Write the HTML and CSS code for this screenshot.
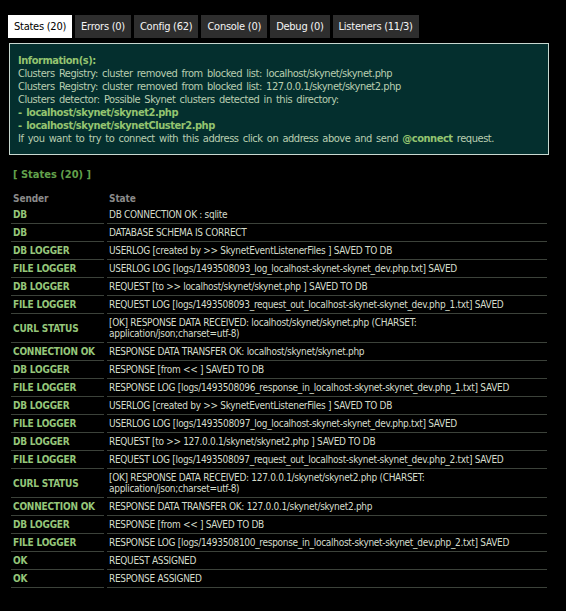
FILE: index.html
```html
<!DOCTYPE html>
<html>
<head>
<meta charset="utf-8">
<link rel="stylesheet" href="styles.css">
</head>
<body>
<div class="tabs">
  <span class="tab active">States (20)</span>
  <span class="tab">Errors (0)</span>
  <span class="tab">Config (62)</span>
  <span class="tab">Console (0)</span>
  <span class="tab">Debug (0)</span>
  <span class="tab">Listeners (11/3)</span>
</div>
<div class="info">
  <div class="hl">Information(s):</div>
  <div>Clusters Registry: cluster removed from blocked list: localhost/skynet/skynet.php</div>
  <div>Clusters Registry: cluster removed from blocked list: 127.0.0.1/skynet/skynet2.php</div>
  <div>Clusters detector: Possible Skynet clusters detected in this directory:</div>
  <div class="hl">- localhost/skynet/skynet2.php</div>
  <div class="hl">- localhost/skynet/skynetCluster2.php</div>
  <div>If you want to try to connect with this address click on address above and send <span class="hl">@connect</span> request.</div>
</div>
<div class="title">[ States (20) ]</div>
<table class="states">
  <thead><tr><th class="c1">Sender</th><th>State</th></tr></thead>
  <tbody>
    <tr><td class="s">DB</td><td>DB CONNECTION OK : sqlite</td></tr>
    <tr><td class="s">DB</td><td>DATABASE SCHEMA IS CORRECT</td></tr>
    <tr><td class="s">DB LOGGER</td><td>USERLOG [created by &gt;&gt; SkynetEventListenerFiles ] SAVED TO DB</td></tr>
    <tr><td class="s">FILE LOGGER</td><td>USERLOG LOG [logs/1493508093_log_localhost-skynet-skynet_dev.php.txt] SAVED</td></tr>
    <tr><td class="s">DB LOGGER</td><td>REQUEST [to &gt;&gt; localhost/skynet/skynet.php ] SAVED TO DB</td></tr>
    <tr><td class="s">FILE LOGGER</td><td>REQUEST LOG [logs/1493508093_request_out_localhost-skynet-skynet_dev.php_1.txt] SAVED</td></tr>
    <tr><td class="s">CURL STATUS</td><td>[OK] RESPONSE DATA RECEIVED: localhost/skynet/skynet.php (CHARSET:<br>application/json;charset=utf-8)</td></tr>
    <tr><td class="s">CONNECTION OK</td><td>RESPONSE DATA TRANSFER OK: localhost/skynet/skynet.php</td></tr>
    <tr><td class="s">DB LOGGER</td><td>RESPONSE [from &lt;&lt; ] SAVED TO DB</td></tr>
    <tr><td class="s">FILE LOGGER</td><td>RESPONSE LOG [logs/1493508096_response_in_localhost-skynet-skynet_dev.php_1.txt] SAVED</td></tr>
    <tr><td class="s">DB LOGGER</td><td>USERLOG [created by &gt;&gt; SkynetEventListenerFiles ] SAVED TO DB</td></tr>
    <tr><td class="s">FILE LOGGER</td><td>USERLOG LOG [logs/1493508097_log_localhost-skynet-skynet_dev.php.txt] SAVED</td></tr>
    <tr><td class="s">DB LOGGER</td><td>REQUEST [to &gt;&gt; 127.0.0.1/skynet/skynet2.php ] SAVED TO DB</td></tr>
    <tr><td class="s">FILE LOGGER</td><td>REQUEST LOG [logs/1493508097_request_out_localhost-skynet-skynet_dev.php_2.txt] SAVED</td></tr>
    <tr><td class="s">CURL STATUS</td><td>[OK] RESPONSE DATA RECEIVED: 127.0.0.1/skynet/skynet2.php (CHARSET:<br>application/json;charset=utf-8)</td></tr>
    <tr><td class="s">CONNECTION OK</td><td>RESPONSE DATA TRANSFER OK: 127.0.0.1/skynet/skynet2.php</td></tr>
    <tr><td class="s">DB LOGGER</td><td>RESPONSE [from &lt;&lt; ] SAVED TO DB</td></tr>
    <tr><td class="s">FILE LOGGER</td><td>RESPONSE LOG [logs/1493508100_response_in_localhost-skynet-skynet_dev.php_2.txt] SAVED</td></tr>
    <tr><td class="s">OK</td><td>REQUEST ASSIGNED</td></tr>
    <tr><td class="s">OK</td><td>RESPONSE ASSIGNED</td></tr>
  </tbody>
</table>
</body>
</html>
```
FILE: styles.css
```css
html, body {
  background: #000;
}
body {
  margin: 0;
  padding: 15px 8px 0 8px;
  font-family: "DejaVu Sans Condensed", "DejaVu Sans", sans-serif;
  color: #cfd8c8;
}
.tabs {
  display: flex;
  gap: 3px;
  height: 23px;
}
.tab {
  display: flex;
  align-items: center;
  padding: 0 6px;
  background: #2e2e2e;
  color: #f4f4f4;
  font-size: 11px;
  letter-spacing: -0.25px;
}
.tab.active {
  background: #fff;
  color: #000;
}
.info {
  margin: 5px 9px 0 1px;
  border: 1px solid #c8d8d0;
  background: #042f2e;
  padding: 10px 8px 9px 8px;
  font-size: 11px;
  line-height: 13px;
  letter-spacing: -0.45px;
  word-spacing: 1.5px;
  color: #b9ceb0;
}
.info .hl {
  color: #94c470;
  font-weight: bold;
}
.title {
  margin: 13px 0 0 5px;
  font-size: 11px;
  line-height: 14px;
  font-weight: bold;
  color: #62a04c;
}
.states {
  margin: 11px 0 0 0;
  width: 542px;
  border-collapse: separate;
  border-spacing: 3px 0;
  font-size: 10px;
  letter-spacing: -0.3px;
}
.states th {
  text-align: left;
  color: #8a8a8a;
  font-weight: bold;
  padding: 0 2px 1px 2px;
  line-height: 12px;
  letter-spacing: -0.1px;
}
.states th.c1 {
  width: 89px;
}
.states td {
  padding: 3px 2px 3px 2px;
  border-bottom: 1px solid #3c423a;
  line-height: 11px;
  height: 11px;
  vertical-align: middle;
  color: #d4dccb;
}
.states td.s {
  color: #95c67a;
  font-weight: bold;
  letter-spacing: -0.2px;
}
```
